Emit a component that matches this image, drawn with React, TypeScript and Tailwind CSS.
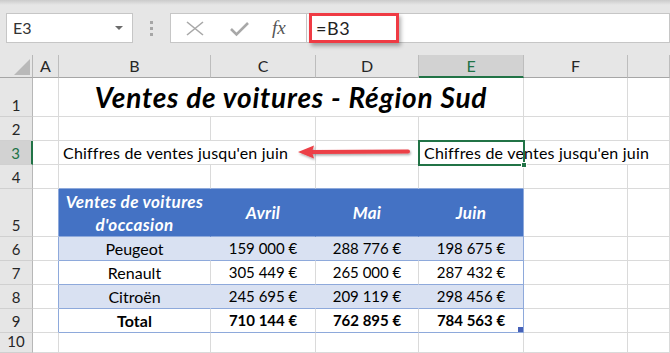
import type { ReactNode } from "react";

// Excel-ish sheet: formula bar on top, grid below.
const COLS = ["A", "B", "C", "D", "E", "F", ""];

interface CellProps {
  className?: string;
  r?: string;
  b?: string;
  children?: ReactNode;
}

function Cell({
  className = "",
  r = "border-r-[#dadada]",
  b = "border-b-[#dadada]",
  children,
}: CellProps) {
  return (
    <div className={`flex items-center border-r border-b ${r} ${b} ${className}`}>
      {children}
    </div>
  );
}

function RowHead({ n, active = false }: { n: number; active?: boolean }) {
  return (
    <div
      className={`flex items-end justify-center border-b border-b-[#d0d0d0] pb-[1px] text-[15px] leading-[20px] ${
        active
          ? "border-r-2 border-r-[#217346] bg-[#d2d2d2] text-[#217346]"
          : "border-r border-r-[#b7b7b7] bg-[#e6e6e6] text-[#262626]"
      }`}
    >
      {n}
    </div>
  );
}

const BLUE = "border-r-[#8ea9db]";
const BLUE_B = "border-b-[#8ea9db]";

function TableRow({
  n,
  name,
  values,
  shaded,
  bold,
}: {
  n: number;
  name: string;
  values: string[];
  shaded: boolean;
  bold?: boolean;
}) {
  const bg = shaded ? "bg-[#d9e1f2]" : "bg-white";
  const inner = shaded ? "border-r-[#d9e1f2]" : "border-r-[#dadada]";
  const weight = bold ? "font-bold" : "";
  return (
    <>
      <RowHead n={n} />
      <Cell r={BLUE} />
      <Cell r={inner} b={BLUE_B} className={`${bg} ${weight} justify-center text-[16px]`}>
        {name}
      </Cell>
      {values.map((v, i) => (
        <Cell
          key={v}
          r={i === values.length - 1 ? BLUE : inner}
          b={BLUE_B}
          className={`${bg} ${weight} relative justify-center`}
        >
          {v}
          {bold && i === values.length - 1 && (
            <span className="absolute right-0 bottom-0 h-[5px] w-[5px] bg-[#4661b8]" />
          )}
        </Cell>
      ))}
      <Cell />
      <Cell />
    </>
  );
}

function PlainRow({ n, tableTop = false }: { n: number; tableTop?: boolean }) {
  return (
    <>
      <RowHead n={n} />
      <Cell />
      {[0, 1, 2, 3].map((i) => (
        <Cell key={i} b={tableTop ? BLUE_B : "border-b-[#dadada]"} />
      ))}
      <Cell />
      <Cell />
    </>
  );
}

export default function App() {
  return (
    <div className="relative h-[353px] w-[670px] overflow-hidden bg-white font-[Lato,'Liberation_Sans',sans-serif] text-[15px] text-black">
      {/* Formula bar */}
      <div className="relative flex h-[55px] items-start bg-[#e6e6e6] pt-[13px]">
        <div className="absolute inset-x-0 top-0 h-[5px] bg-gradient-to-b from-[#cbcbcb] to-[#e6e6e6]" />
        <div className="relative ml-[6px] flex h-[30px] w-[127px] items-center border border-[#c6c6c6] bg-white pl-[6px] pr-[9px] text-[16px] text-[#333]">
          <span className="flex-1">E3</span>
          <span className="h-0 w-0 border-x-[4px] border-t-[4px] border-x-transparent border-t-[#6b6b6b]" />
        </div>
        <div className="flex w-[37px] flex-col items-center gap-[3px] pt-[8px]">
          <span className="h-[3px] w-[3px] bg-[#a6a6a6]" />
          <span className="h-[3px] w-[3px] bg-[#a6a6a6]" />
          <span className="h-[3px] w-[3px] bg-[#a6a6a6]" />
        </div>
        <div className="flex h-[30px] w-[137px] items-center border border-[#c6c6c6] bg-white">
          <svg width="46" height="28" viewBox="0 0 46 28" className="ml-[1px]">
            <path d="M15 8 L31 21 M31 8 L15 21" stroke="#a8a8a8" strokeWidth="1.6" fill="none" />
          </svg>
          <svg width="46" height="28" viewBox="0 0 46 28">
            <path d="M13 15 L18.5 20.5 L30 9" stroke="#a8a8a8" strokeWidth="2.6" fill="none" />
          </svg>
          <span className="ml-[8px] font-['Liberation_Serif',serif] text-[19px] italic text-[#555]">
            fx
          </span>
        </div>
        <div className="relative h-[30px] flex-1 border-y border-r border-[#c6c6c6] bg-white">
          <div className="absolute left-[2px] top-[-1px] flex h-[30px] w-[90px] items-center border-[3px] border-[#ef3b44] pl-[4px] text-[18px] tracking-[0.6px] text-[#222] shadow-[2px_3px_4px_rgba(0,0,0,0.3)]">
            =B3
          </div>
        </div>
      </div>

      {/* Sheet grid */}
      <div className="grid grid-cols-[33px_26px_152px_105px_103px_105px_104px_42px] grid-rows-[23px_39px_24px_24px_24px_48px_24px_24px_24px_24px_20px]">
        {/* column headers */}
        <div className="relative border-r border-b border-r-[#b7b7b7] border-b-[#a6a6a6] bg-[#e6e6e6]">
          <svg width="18" height="18" viewBox="0 0 18 18" className="absolute left-[13px] top-[3px]">
            <path d="M17 1 L17 17 L1 17 Z" fill="#b9b9b9" />
          </svg>
        </div>
        {COLS.map((c) =>
          c === "E" ? (
            <div
              key={c}
              className="flex items-center justify-center border-r border-b-2 border-r-[#bdbdbd] border-b-[#217346] bg-[#d2d2d2] pt-[1px] text-[16px] text-[#217346]"
            >
              {c}
            </div>
          ) : (
            <div
              key={c || "G"}
              className="flex items-center justify-center border-r border-b border-r-[#bdbdbd] border-b-[#a6a6a6] bg-[#e6e6e6] text-[16px] text-[#262626]"
            >
              {c}
            </div>
          ),
        )}

        {/* row 1 */}
        <RowHead n={1} />
        <Cell />
        <div className="col-span-4 flex items-end justify-center border-r border-b border-r-[#dadada] border-b-[#dadada] pb-[4px] text-[28px] leading-[30px] font-bold italic tracking-[0.8px]">
          Ventes de voitures - Région Sud
        </div>
        <Cell />
        <Cell />

        {/* row 2 */}
        <PlainRow n={2} />

        {/* row 3 */}
        <RowHead n={3} active />
        <Cell />
        <Cell className="col-span-2 whitespace-nowrap pl-[4px] text-[16px] tracking-[0.2px]">
          Chiffres de ventes jusqu&apos;en juin
        </Cell>
        <Cell />
        <Cell className="col-span-3 relative whitespace-nowrap pl-[5px] text-[16px] tracking-[0.2px]">
          Chiffres de ventes jusqu&apos;en juin
          <span className="pointer-events-none absolute -left-[1px] -top-[1px] h-[26px] w-[107px] border-2 border-[#217346]" />
          <span className="absolute left-[102px] top-[21px] h-[6px] w-[6px] border border-white bg-[#217346]" />
        </Cell>

        {/* row 4 */}
        <PlainRow n={4} tableTop />

        {/* row 5: table header */}
        <RowHead n={5} />
        <Cell r={BLUE} />
        <Cell
          r="border-r-[#4472c4]"
          b={BLUE_B}
          className="flex-col justify-center bg-[#4472c4] text-center text-[17px] leading-[23px] font-bold italic tracking-[0.4px] text-white"
        >
          <span>Ventes de voitures</span>
          <span>d&apos;occasion</span>
        </Cell>
        {["Avril", "Mai", "Juin"].map((m, i) => (
          <Cell
            key={m}
            r={i === 2 ? BLUE : "border-r-[#4472c4]"}
            b={BLUE_B}
            className="justify-center bg-[#4472c4] text-[17px] font-bold italic tracking-[0.3px] text-white"
          >
            {m}
          </Cell>
        ))}
        <Cell />
        <Cell />

        <TableRow n={6} name="Peugeot" values={["159 000 €", "288 776 €", "198 675 €"]} shaded />
        <TableRow n={7} name="Renault" values={["305 449 €", "265 000 €", "287 432 €"]} shaded={false} />
        <TableRow n={8} name="Citroën" values={["245 695 €", "209 119 €", "298 456 €"]} shaded />
        <TableRow n={9} name="Total" values={["710 144 €", "762 895 €", "784 563 €"]} shaded={false} bold />

        <PlainRow n={10} />
      </div>

      {/* red arrow pointing from E3 back to B3 */}
      <svg
        width="124"
        height="20"
        viewBox="0 0 124 20"
        className="pointer-events-none absolute left-[294px] top-[142px]"
      >
        <defs>
          <filter id="sh" x="-10%" y="-50%" width="120%" height="200%">
            <feDropShadow dx="1" dy="1.5" stdDeviation="1" floodOpacity="0.35" />
          </filter>
        </defs>
        <g filter="url(#sh)">
          <path d="M18 10 L114 9.5" stroke="#ec3f46" strokeWidth="4" strokeLinecap="round" />
          <path d="M4 10 L20 3.5 L18 10 L20 16.5 Z" fill="#ec3f46" />
        </g>
      </svg>
    </div>
  );
}
